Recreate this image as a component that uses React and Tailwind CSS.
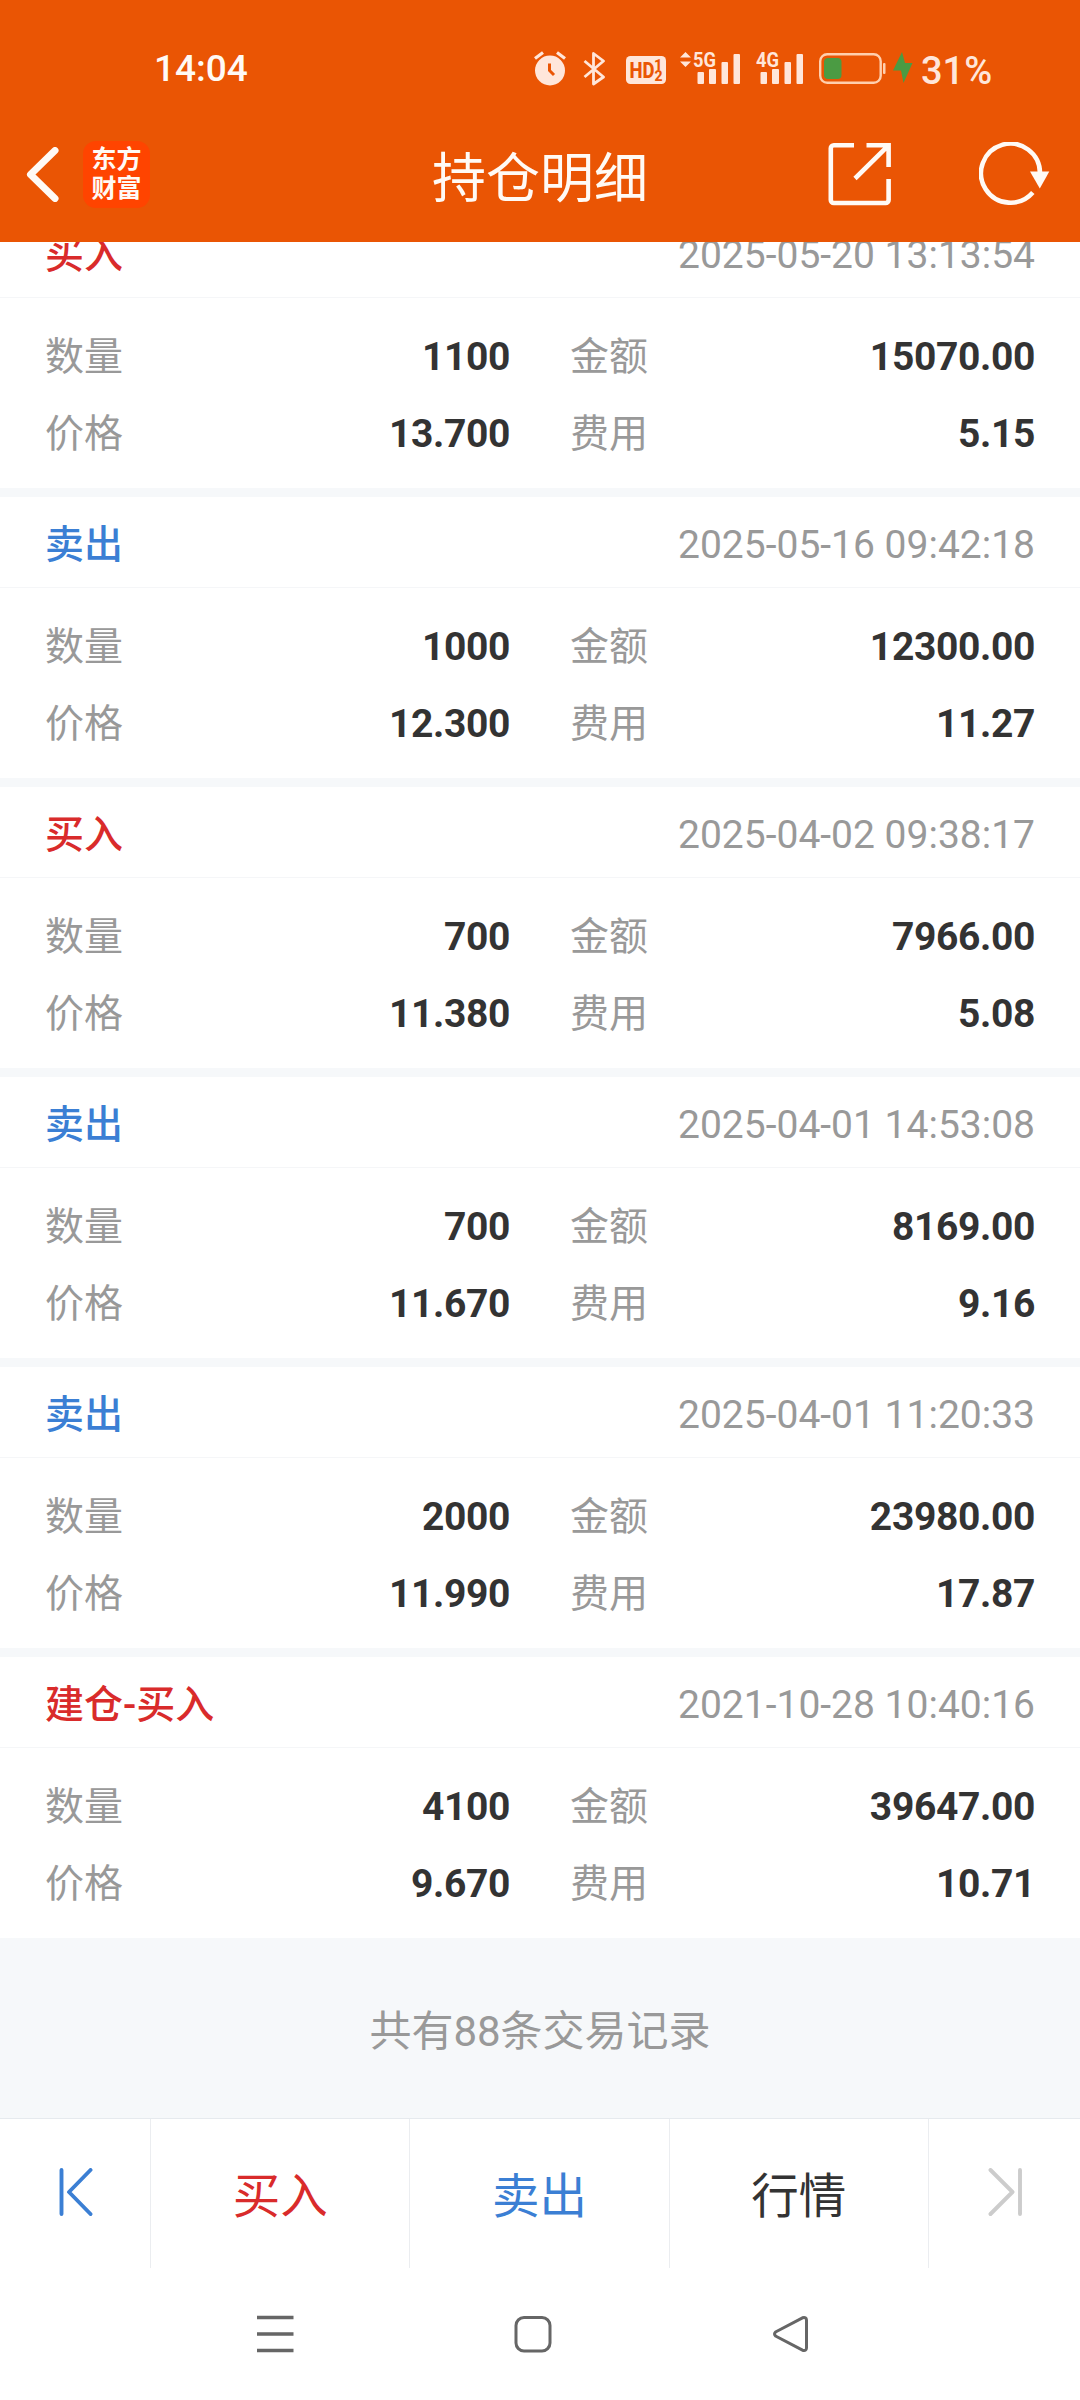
import React from "react";

const records = [
  { type: "买入", time: "2025-05-20 13:13:54", qty: "1100", amount: "15070.00", price: "13.700", fee: "5.15" },
  { type: "卖出", time: "2025-05-16 09:42:18", qty: "1000", amount: "12300.00", price: "12.300", fee: "11.27" },
  { type: "买入", time: "2025-04-02 09:38:17", qty: "700", amount: "7966.00", price: "11.380", fee: "5.08" },
  { type: "卖出", time: "2025-04-01 14:53:08", qty: "700", amount: "8169.00", price: "11.670", fee: "9.16" },
  { type: "卖出", time: "2025-04-01 11:20:33", qty: "2000", amount: "23980.00", price: "11.990", fee: "17.87" },
  { type: "建仓-买入", time: "2021-10-28 10:40:16", qty: "4100", amount: "39647.00", price: "9.670", fee: "10.71" },
];

function AlarmIcon() {
  return (
    <svg width="34" height="36" viewBox="0 0 34 36" fill="none">
      <circle cx="16" cy="20.500" r="15" fill="#ffe6da" />
      <path d="M1 8.500 9 2.500M31 8.500 23 2.500" stroke="#ffe6da" strokeWidth="3.200" />
      <path d="M15.500 13.500v7l4.500 4.500" stroke="#ea5504" strokeWidth="3" />
    </svg>
  );
}

function BluetoothIcon() {
  return (
    <svg width="22" height="36" viewBox="0 0 22 36" fill="none" stroke="#ffe6da" strokeWidth="2.800" strokeLinejoin="round">
      <path d="M1.500 11 20.500 27 10.500 34V3.500L20.500 11 1.500 27" />
    </svg>
  );
}

function HdIcon() {
  return (
    <svg width="40" height="28" viewBox="0 0 40 28">
      <rect width="40" height="28" rx="4.500" fill="#ffe6da" />
      <g fill="#ea5504" fontFamily="Roboto, sans-serif" fontWeight="800">
        <text x="3.500" y="22" fontSize="22.500" textLength="25" lengthAdjust="spacingAndGlyphs">HD</text>
        <text x="28" y="13.500" fontSize="14.500">1</text>
        <text x="28.500" y="25" fontSize="14">2</text>
      </g>
    </svg>
  );
}

function SignalIcon({ label, data }) {
  return (
    <svg width="60" height="36" viewBox="0 0 60 36" fill="#ffe6da">
      {data && <path d="M0 9.500 5.500 4 11 9.500ZM0 13.500 5.500 19 11 13.500Z" />}
      <text x="13" y="18.500" fontFamily="Roboto, sans-serif" fontWeight="700" fontSize="20.500" textLength="23" lengthAdjust="spacingAndGlyphs">{label}</text>
      <rect x="17.500" y="24" width="6.500" height="12" rx="1" />
      <rect x="29" y="21" width="7" height="15" rx="1" />
      <rect x="41.500" y="14" width="6.500" height="22" rx="1" />
      <rect x="53.500" y="6" width="6.500" height="30" rx="1" />
    </svg>
  );
}

function BatteryIcon() {
  return (
    <svg width="67" height="31" viewBox="0 0 67 31">
      <rect x="1.200" y="1.200" width="60.500" height="28.600" rx="7" fill="none" stroke="#ffcfae" strokeWidth="2.400" />
      <rect x="5" y="5" width="17.500" height="21" rx="4" fill="#4b9b43" />
      <rect x="64" y="10" width="2.500" height="11" rx="1" fill="#ffcfae" />
    </svg>
  );
}

function BoltIcon() {
  return (
    <svg width="20" height="32" viewBox="0 0 20 32">
      <path d="M9 0 0 18.500h8L10.500 31 19.500 11H12Z" fill="#4b9b43" />
    </svg>
  );
}

function StatusBar() {
  return (
    <div className="flex h-[98px] pl-[154px] text-[37px] leading-[44px] font-medium">
      <span className="mt-[47px] w-[380px]">14:04</span>
      <div className="mt-[50px] flex h-9 items-end">
        <AlarmIcon />
        <div className="ml-[15px]"><BluetoothIcon /></div>
        <div className="mb-[2px] ml-[21px]"><HdIcon /></div>
        <div className="mb-[2px] ml-[14px]"><SignalIcon label="5G" data /></div>
        <div className="mb-[2px] ml-[3px]"><SignalIcon label="4G" /></div>
        <div className="mb-[2px] ml-4"><BatteryIcon /></div>
        <div className="mb-[2px] ml-[7px]"><BoltIcon /></div>
      </div>
      <span className="mt-[49px] ml-[8px] text-[38px] text-[#ffe6da]">31%</span>
    </div>
  );
}

function NavBar() {
  return (
    <div className="grid h-36 grid-cols-[1fr_auto_1fr]">
      <div className="flex pl-[26px]">
        <svg className="mt-[49px]" width="33" height="55" viewBox="0 0 33 55" fill="none" stroke="#fffaf5" strokeWidth="7">
          <path d="M29 3.500 4.500 27.500 29 51.500" strokeLinejoin="round" strokeLinecap="round" />
        </svg>
        <div className="mt-[43px] ml-[24px] h-[67px] w-[67px] rounded-[13px] bg-[#ff4400] pt-[4px] text-center text-[25px] leading-[29px] font-bold">
          <div>东方</div>
          <div>财富</div>
        </div>
      </div>
      <h1 className="mt-[50px] text-[54px] leading-[64px] font-normal">持仓明细</h1>
      <div className="flex justify-end pr-[30px]">
        <svg className="mt-[44px]" width="64" height="64" viewBox="0 0 64 64" fill="none" stroke="#fffaf5" strokeWidth="4.600">
          <path d="M26 3.300H5.800a3 3 0 0 0-3 3V58a3 3 0 0 0 3 3H57.600a3 3 0 0 0 3-3V37" />
          <path d="M38.500 3.300h22.100V25M60 3.900 27 36.500" />
        </svg>
        <svg className="mt-[44px] ml-[87px]" width="71" height="66" viewBox="0 0 71 66" fill="none">
          <path d="M61 31A29.500 29.500 0 1 0 53.800 50.500" stroke="#fffaf5" strokeWidth="4.600" />
          <path d="M51 29.500h19.300L60.800 46.500Z" fill="#fffaf5" />
        </svg>
      </div>
    </div>
  );
}

function Field({ label, value }) {
  return (
    <div className="flex h-[77px] items-center justify-between">
      <span className="text-[#999999]">{label}</span>
      <span className="font-bold tracking-[-0.35px] text-[#333333]">{value}</span>
    </div>
  );
}

function RecordCard({ record }) {
  const color = record.type === "卖出" ? "text-[#3b7fd4]" : "text-[#d92b2b]";
  return (
    <article className="h-[281px] shrink-0 bg-white text-[39px]">
      <header className="flex h-[91px] items-center justify-between border-b border-[#f5f6f8] px-[45px] pt-[6px]">
        <span className={"font-medium " + color}>{record.type}</span>
        <time className="text-[#999999]">{record.time}</time>
      </header>
      <div className="grid grid-cols-2 gap-x-[60px] px-[45px] pt-[21px]">
        <Field label="数量" value={record.qty} />
        <Field label="金额" value={record.amount} />
        <Field label="价格" value={record.price} />
        <Field label="费用" value={record.fee} />
      </div>
    </article>
  );
}

function ActionBar() {
  return (
    <div className="flex h-[150px] divide-x divide-[#ebedf0] border-t border-[#e6eaee] text-[47.500px]">
      <div className="flex w-[151px] shrink-0 justify-center pt-[49px]">
        <svg width="35" height="48" viewBox="0 0 35 48" fill="none" stroke="#3b7fd4" strokeWidth="3.900" strokeLinecap="round" strokeLinejoin="round">
          <path d="M3.500 2v44M32.500 2 11 24l21.500 22" />
        </svg>
      </div>
      <div className="flex-1 pt-[42px] text-center leading-[72px] text-[#d92b2b]">买入</div>
      <div className="flex-1 pt-[42px] text-center leading-[72px] text-[#3b7fd4]">卖出</div>
      <div className="flex-1 pt-[42px] text-center leading-[72px] text-[#333333]">行情</div>
      <div className="flex w-[151px] shrink-0 justify-center pt-[49px]">
        <svg width="35" height="48" viewBox="0 0 35 48" fill="none" stroke="#cccccc" strokeWidth="3.900" strokeLinecap="round" strokeLinejoin="round">
          <path d="M33 2v44M3.500 2 25.500 24 3.500 46" />
        </svg>
      </div>
    </div>
  );
}

function SystemNav() {
  return (
    <div className="flex h-[132px] items-center gap-[220px] pl-[256px]">
      <svg width="38" height="38" viewBox="0 0 38 38" stroke="#666666" strokeWidth="3.300">
        <path d="M1 2.500h36.500M1 19h36.500M1 35.500h36.500" />
      </svg>
      <svg width="38" height="38" viewBox="0 0 38 38" fill="none" stroke="#666666" strokeWidth="3">
        <rect x="2" y="2.500" width="34" height="33.500" rx="8" />
      </svg>
      <svg width="38" height="38" viewBox="0 0 38 38" fill="none" stroke="#666666" strokeWidth="3" strokeLinejoin="round">
        <path d="M3.500 17 30.500 2.800q3.800-1 4 2.200v28q-.2 3.400-4 2.200L3.500 21q-2-2 0-4Z" />
      </svg>
    </div>
  );
}

export default function App() {
  return (
    <div className="flex h-[2400px] w-[1080px] flex-col overflow-hidden bg-white font-[Roboto,'Noto_Sans_CJK_SC',sans-serif]">
      <div className="h-[242px] shrink-0 bg-[#ea5504] text-[#fffaf5]">
        <StatusBar />
        <NavBar />
      </div>
      <main className="flex h-[1876px] shrink-0 flex-col justify-end overflow-hidden bg-[#f6f8fa]">
        <div className="flex flex-col gap-[9px]">
          {records.map((r) => (
            <RecordCard key={r.time} record={r} />
          ))}
        </div>
        <p className="h-[180px] shrink-0 pt-[2px] text-center text-[42px] leading-[184px] text-[#999999]">共有88条交易记录</p>
      </main>
      <ActionBar />
      <SystemNav />
    </div>
  );
}
